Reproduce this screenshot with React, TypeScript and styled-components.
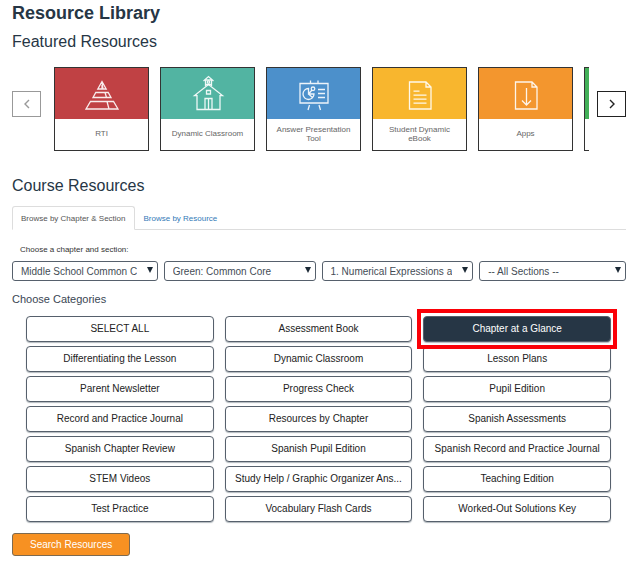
import React, { useState } from 'react';
import styled, { createGlobalStyle, css } from 'styled-components';

const ink = '#263645';
const line = '#56606c';

const GlobalStyle = createGlobalStyle`
  * { box-sizing: border-box; }
  body {
    margin: 0;
    background: #fff;
    color: ${ink};
    font-family: "Liberation Sans", Arial, sans-serif;
    font-size: 10px;
  }
  button, select { font-family: inherit; }
`;

const Page = styled.main`
  padding: 2px 15px 28px 12px;
`;

const Title = styled.h1`
  margin: 0;
  font-size: 18px;
  line-height: 22px;
  font-weight: 700;
`;

const SectionTitle = styled.h2<{ $top: number }>`
  margin: ${(p) => p.$top}px 0 0;
  font-size: 16px;
  line-height: 20px;
  font-weight: 400;
`;

const Carousel = styled.section`
  display: flex;
  align-items: flex-start;
  margin-top: 15px;
`;

const ArrowButton = styled.button`
  flex: none;
  display: grid;
  place-items: center;
  width: 29px;
  height: 26px;
  margin-top: 24px;
  padding: 0;
  background: #fff;
  color: #222;
  border: 1px solid currentColor;
  &:disabled { color: #999; }
`;

const Track = styled.ul`
  flex: 1;
  min-width: 0;
  display: flex;
  gap: 11px;
  margin: 0 8px 0 13px;
  padding: 0;
  overflow: hidden;
  list-style: none;
`;

const Card = styled.li`
  flex: none;
  width: 95px;
  border: 1px solid #333;
`;

const CardLink = styled.a`
  display: block;
  color: #666;
  text-decoration: none;
`;

const CardArt = styled.div<{ $color: string }>`
  display: grid;
  place-items: center;
  height: 51px;
  background: ${(p) => p.$color};
`;

const CardLabel = styled.div`
  display: grid;
  place-items: center;
  height: 31px;
  padding: 0 7px 2px;
  font-size: 8px;
  line-height: 9px;
  text-align: center;
`;

const Tabs = styled.div`
  display: flex;
  margin-top: 10px;
  border-bottom: 1px solid #ddd;
`;

const Tab = styled.button<{ $active: boolean }>`
  height: 24px;
  margin-bottom: -1px;
  padding: 0 8px;
  background: none;
  border: 1px solid transparent;
  border-radius: 3px 3px 0 0;
  color: #337ab7;
  font-size: 8px;
  ${(p) =>
    p.$active &&
    css`
      background: #fff;
      border-color: #ddd #ddd #fff;
      color: #555;
    `}
`;

const FilterHint = styled.p`
  margin: 15px 0 0 8px;
  font-size: 8px;
  line-height: 10px;
  color: #333;
`;

const Filters = styled.div`
  display: grid;
  grid-template-columns: 146fr 152fr 152fr 147fr;
  gap: 6px;
  margin-top: 6px;
`;

const SelectBox = styled.div`
  position: relative;
  min-width: 0;
`;

const Select = styled.select`
  display: block;
  width: 100%;
  height: 20px;
  padding: 0 20px 0 8px;
  appearance: none;
  background: #fff;
  border: 1px solid ${line};
  border-radius: 3px;
  color: #444c55;
  font-size: 10px;
`;

const Caret = styled.svg`
  position: absolute;
  top: 6px;
  right: 5px;
  pointer-events: none;
`;

const GroupTitle = styled.h3`
  margin: 11px 0 0;
  font-size: 11px;
  line-height: 14px;
  font-weight: 400;
  color: #3a4653;
`;

const Categories = styled.div`
  display: grid;
  grid-template-columns: repeat(3, minmax(0, 1fr));
  gap: 4px 11px;
  margin: 10px 15px 0 14px;
`;

const CategorySlot = styled.div<{ $marked: boolean }>`
  position: relative;
  ${(p) =>
    p.$marked &&
    css`
      z-index: 1;
      &::after {
        content: '';
        position: absolute;
        inset: -7px -6px;
        border: 4px solid #fb0007;
        pointer-events: none;
      }
    `}
`;

const Category = styled.button<{ $selected: boolean }>`
  display: block;
  width: 100%;
  height: 26px;
  padding: 0 7px 2px;
  overflow: hidden;
  white-space: nowrap;
  text-overflow: ellipsis;
  background: ${(p) => (p.$selected ? ink : '#fff')};
  color: ${(p) => (p.$selected ? '#fff' : '#222')};
  border: 1px solid ${line};
  border-radius: 4px;
  box-shadow: 0 1px 1px rgba(38, 54, 69, 0.35);
  font-size: 10px;
`;

const SearchButton = styled.button`
  display: block;
  height: 23px;
  margin-top: 11px;
  padding: 0 17px 1px;
  background: #f79122;
  border: 1px solid #7d6a50;
  border-radius: 3px;
  color: #fff;
  font-size: 10px;
`;

function Chevron({ d }: { d: string }) {
  return (
    <svg width="8" height="12" viewBox="0 0 8 12" fill="none" stroke="currentColor" strokeWidth="1.4" aria-hidden="true">
      <path d={d} />
    </svg>
  );
}

const artPaths: Record<string, React.ReactNode> = {
  pyramid: (
    <>
      <path d="M20 7.5 15.8 15H24.2ZM20 8 21 15M20 11V15" />
      <path d="M13.8 18.5H26.2L29 23.5H11ZM23 18.5 24.5 23.5" />
      <path d="M8.5 27.5H31.5L36 35H4ZM25 27.5 27 35" />
    </>
  ),
  school: (
    <>
      <path d="M15.5 7 20.5 2.5 25.5 7M17.5 6V12M23.5 6V12M17.5 6H23.5M17.5 10.5H23.5" />
      <circle cx="20.5" cy="8" r="1.2" />
      <path d="M9 21.5H6.5L20.5 10.5 34.5 21.5H32M9 21V35.5H32V21M18.5 16.5H22.5V20H18.5ZM17 35.5V24.5H24V35.5M20.5 25V35.5" />
    </>
  ),
  board: (
    <>
      <path d="M6 9.5H34V29H6ZM16.5 9V6.5M24 9V6.5M15.5 31 14 36M25 31 26.5 36" />
      <path d="M14.5 14.5A5.5 5.5 0 1 0 20 20L14.5 20ZM14.5 20 18.5 23.5M14.5 20 18 16" />
      <circle cx="19" cy="14.8" r="1.8" />
      <path d="M24 15.5H31M24 19.5H31M24 23.5H31" />
    </>
  ),
  page: (
    <>
      <path d="M9.5 8H26L31 13V35H9.5ZM26 8V13H31" />
      <path d="M13.5 17.2H19.5M13.5 21.2H26.5M13.5 25.2H26.5M13.5 29.2H26.5" />
    </>
  ),
  download: <path d="M9.5 8H26L31 13V35H9.5ZM26 8V13H31M20.5 14V31M16 26.5 20.5 31 25 26.5" />,
};

function Art({ name }: { name: string }) {
  return (
    <svg width="40" height="40" viewBox="0 0 40 40" fill="none" stroke="#fff" strokeWidth="1.3" strokeOpacity="0.9" aria-hidden="true">
      {artPaths[name]}
    </svg>
  );
}

const featured = [
  { label: 'RTI', color: '#c04144', art: 'pyramid' },
  { label: 'Dynamic Classroom', color: '#52b4a2', art: 'school' },
  { label: 'Answer Presentation Tool', color: '#4c90cb', art: 'board' },
  { label: 'Student Dynamic eBook', color: '#f8b62e', art: 'page' },
  { label: 'Apps', color: '#f3962e', art: 'download' },
  { label: '', color: '#42b058', art: '' },
];

const filters = [
  { label: 'Program', value: 'Middle School Common Core' },
  { label: 'Book', value: 'Green: Common Core' },
  { label: 'Chapter', value: '1. Numerical Expressions and Factors' },
  { label: 'Section', value: '-- All Sections --' },
];

const categories = [
  'SELECT ALL', 'Assessment Book', 'Chapter at a Glance',
  'Differentiating the Lesson', 'Dynamic Classroom', 'Lesson Plans',
  'Parent Newsletter', 'Progress Check', 'Pupil Edition',
  'Record and Practice Journal', 'Resources by Chapter', 'Spanish Assessments',
  'Spanish Chapter Review', 'Spanish Pupil Edition', 'Spanish Record and Practice Journal',
  'STEM Videos', 'Study Help / Graphic Organizer Ans...', 'Teaching Edition',
  'Test Practice', 'Vocabulary Flash Cards', 'Worked-Out Solutions Key',
];

export default function App() {
  const [tab, setTab] = useState(0);
  const [selected, setSelected] = useState('Chapter at a Glance');

  return (
    <>
      <GlobalStyle />
      <Page>
        <Title>Resource Library</Title>
        <SectionTitle $top={8}>Featured Resources</SectionTitle>
        <Carousel aria-label="Featured Resources">
          <ArrowButton disabled aria-label="Previous">
            <Chevron d="M6 2 2 6 6 10" />
          </ArrowButton>
          <Track>
            {featured.map((item) => (
              <Card key={item.color}>
                <CardLink href="#">
                  <CardArt $color={item.color}>
                    <Art name={item.art} />
                  </CardArt>
                  <CardLabel>{item.label}</CardLabel>
                </CardLink>
              </Card>
            ))}
          </Track>
          <ArrowButton aria-label="Next">
            <Chevron d="M2 2 6 6 2 10" />
          </ArrowButton>
        </Carousel>

        <SectionTitle $top={25}>Course Resources</SectionTitle>
        <Tabs role="tablist">
          {['Browse by Chapter & Section', 'Browse by Resource'].map((name, i) => (
            <Tab key={name} role="tab" aria-selected={tab === i} $active={tab === i} onClick={() => setTab(i)}>
              {name}
            </Tab>
          ))}
        </Tabs>

        <FilterHint>Choose a chapter and section:</FilterHint>
        <Filters>
          {filters.map((f) => (
            <SelectBox key={f.label}>
              <Select aria-label={f.label}>
                <option>{f.value}</option>
              </Select>
              <Caret width="6" height="6" viewBox="0 0 6 6" aria-hidden="true">
                <path d="M0 0H6L3 6Z" fill="#1c2a36" />
              </Caret>
            </SelectBox>
          ))}
        </Filters>

        <GroupTitle>Choose Categories</GroupTitle>
        <Categories>
          {categories.map((name) => (
            <CategorySlot key={name} $marked={name === 'Chapter at a Glance'}>
              <Category $selected={selected === name} aria-pressed={selected === name} onClick={() => setSelected(name)}>
                {name}
              </Category>
            </CategorySlot>
          ))}
        </Categories>
        <SearchButton>Search Resources</SearchButton>
      </Page>
    </>
  );
}
